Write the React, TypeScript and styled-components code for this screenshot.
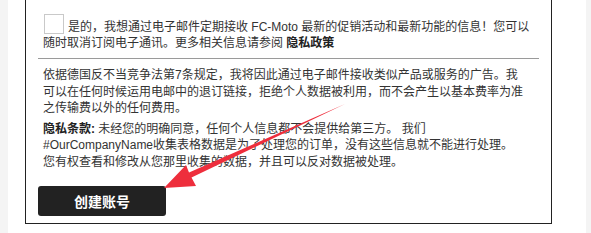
import styled, { createGlobalStyle } from 'styled-components';

const GlobalStyle = createGlobalStyle`
  html, body {
    margin: 0;
    padding: 0;
    background: #fff;
  }
  body {
    font-family: 'Liberation Sans', 'Noto Sans CJK SC', sans-serif;
    font-size: 12px;
    color: #333;
  }
`;

const Page = styled.div`
  position: relative;
  display: flex;
  height: 233px;
  padding: 0 5px 0 8px;
  background: #f4f4f4;
  box-sizing: border-box;
  overflow: hidden;
`;

const Panel = styled.div`
  flex: 1;
  background: #fff;
  padding: 0 34px 8px 17px;
`;

const Card = styled.div`
  border: 1px solid #222;
  border-top: none;
  padding: 14px 12px 7px;
`;

const OptIn = styled.div`
  padding: 0 5px;
  line-height: 16px;
`;

const Checkbox = styled.span`
  display: inline-block;
  width: 20px;
  height: 20px;
  box-sizing: border-box;
  border: 1px solid #c9c9c9;
  background: #fff;
  margin: 0 4px 0 1px;
  vertical-align: -3px;
`;

const Strong = styled.b`
  font-weight: bold;
  color: #222;
`;

const Divider = styled.hr`
  border: none;
  height: 1px;
  background: #9a9a9a;
  margin: 7px 0 0;
`;

const Note = styled.p<{ $gap: number }>`
  margin: ${(p) => p.$gap}px 0 0;
  padding: 0 5px;
  line-height: 16.5px;
`;

const Button = styled.button`
  display: block;
  margin-top: 16px;
  width: 128px;
  height: 30px;
  border: none;
  border-radius: 3px;
  background: #222;
  color: #fff;
  font-family: 'Liberation Sans', 'Noto Sans CJK SC', sans-serif;
  font-size: 14px;
  font-weight: bold;
  cursor: pointer;
`;

const Overlay = styled.svg`
  position: absolute;
  top: 0;
  left: 0;
  pointer-events: none;
`;

// red annotation arrow pointing at the button
const Arrow = () => (
  <Overlay width="591" height="233" viewBox="0 0 591 233">
    <polygon
      points="164,188 186,165 189,172.5 345,104 191.5,177.5 196,186"
      fill="#ee2e3c"
    />
  </Overlay>
);

export default function App() {
  return (
    <>
      <GlobalStyle />
      <Page>
        <Panel>
          <Card>
            <OptIn>
              <Checkbox />
              是的，我想通过电子邮件定期接收 FC-Moto 最新的促销活动和最新功能的信息！您可以
              <br />
              随时取消订阅电子通讯。更多相关信息请参阅 <Strong>隐私政策</Strong>
            </OptIn>
            <Divider />
            <Note $gap={8}>
              依据德国反不当竞争法第7条规定，我将因此通过电子邮件接收类似产品或服务的广告。我
              <br />
              可以在任何时候运用电邮中的退订链接，拒绝个人数据被利用，而不会产生以基本费率为准
              <br />
              之传输费以外的任何费用。
            </Note>
            <Note $gap={4}>
              <Strong>隐私条款:</Strong> 未经您的明确同意，任何个人信息都不会提供给第三方。 我们
              <br />
              #OurCompanyName收集表格数据是为了处理您的订单，没有这些信息就不能进行处理。
              <br />
              您有权查看和修改从您那里收集的数据，并且可以反对数据被处理。
            </Note>
            <Button>创建账号</Button>
          </Card>
        </Panel>
        <Arrow />
      </Page>
    </>
  );
}
